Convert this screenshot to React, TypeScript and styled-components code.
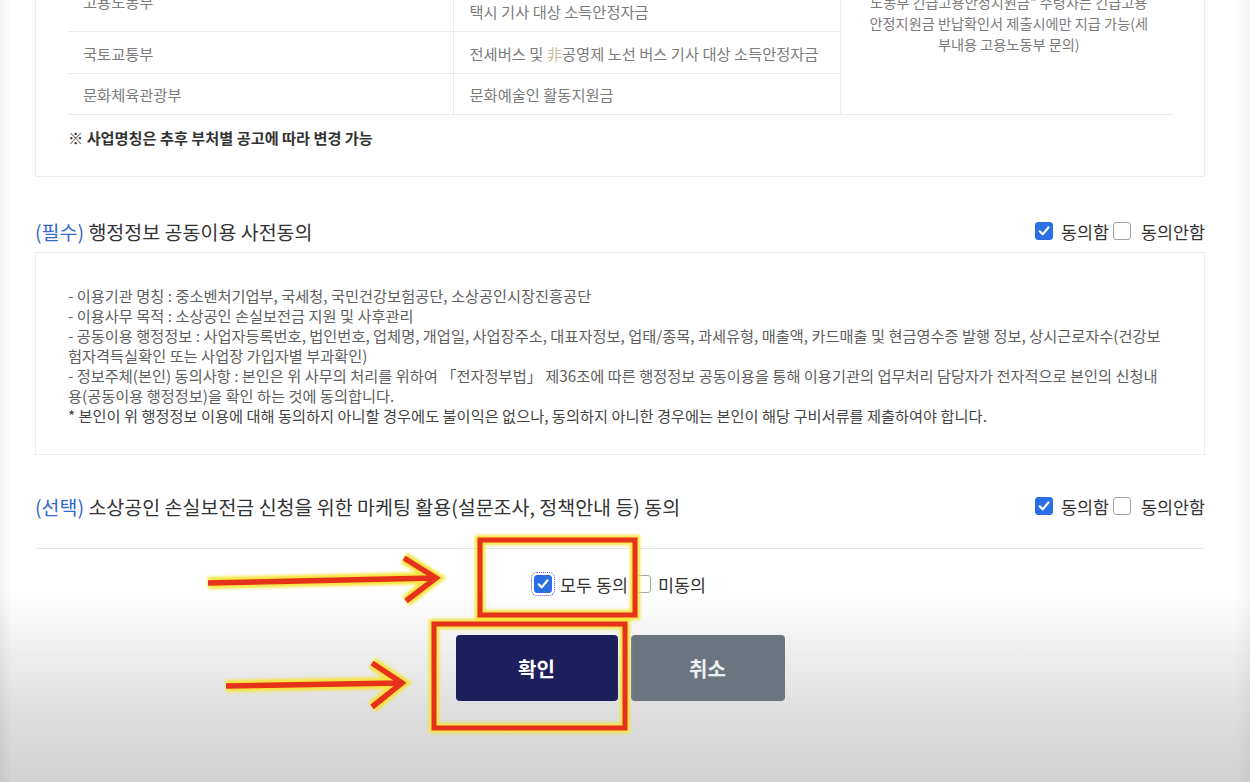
import React from "react";
import styled, { createGlobalStyle } from "styled-components";

const Global = createGlobalStyle`
  html, body { margin: 0; padding: 0; overflow: hidden; }
  body { font-family: "Noto Sans CJK KR", "Noto Sans", sans-serif; background: #fff; }
`;

const Page = styled.div`
  position: relative;
  width: 1250px;
  height: 782px;
  overflow: hidden;
  background:
    linear-gradient(90deg, rgba(0,0,0,0.05) 0, rgba(0,0,0,0) 12px, rgba(0,0,0,0) 1236px, rgba(0,0,0,0.04) 1250px),
    linear-gradient(180deg, #ffffff 0, #ffffff 592px, #ececec 660px, #dcdcdc 720px, #d2d2d2 782px);
`;

const Container = styled.div`
  width: 1170px;
  margin: -29px 0 0 35px;
  display: flex;
  flex-direction: column;
`;

const Card = styled.div`
  border: 1px solid #ececec;
  border-top: none;
  padding: 0 31px 29px 32px;
`;

const Table = styled.table`
  width: 100%;
  border-collapse: collapse;
  table-layout: fixed;
  font-size: 15.3px;
  color: #7b7b7b;
`;

const Cell = styled.td<{ $first?: boolean }>`
  border-bottom: 1px solid #e9e9e9;
  border-left: ${(p) => (p.$first ? "none" : "1px solid #e9e9e9")};
  padding: 10px 15px 10px ${(p) => (p.$first ? "15px" : "16px")};
  line-height: 20px;
  vertical-align: middle;
  white-space: nowrap;
`;

const NoteCell = styled.td`
  border-bottom: 1px solid #e9e9e9;
  border-left: 1px solid #e9e9e9;
  text-align: center;
  vertical-align: bottom;
  padding: 0 6px 59px 10px;
  line-height: 21px;
  font-size: 14.2px;
  color: #7b7b7b;
  white-space: nowrap;
`;

const Faint = styled.span`
  color: #c9b9a0;
`;

const Note = styled.div`
  margin-top: 12px;
  font-size: 15.2px;
  line-height: 20px;
  font-weight: 700;
  color: #333;
`;

const SectionHead = styled.div<{ $top: number }>`
  margin-top: ${(p) => p.$top}px;
  height: 26px;
  display: flex;
  align-items: center;
  justify-content: space-between;
`;

const Title = styled.div`
  font-size: 19.5px;
  color: #333;
  white-space: nowrap;
`;

const Tag = styled.span`
  color: #3569cc;
`;

const Choices = styled.div`
  display: flex;
  align-items: center;
  gap: 4px;
`;

const Choice = styled.label<{ $gap?: number }>`
  display: inline-flex;
  align-items: center;
  gap: ${(p) => p.$gap ?? 8}px;
  font-size: 17.4px;
  color: #333;
  white-space: nowrap;
`;

const BoxMark = styled.span<{ $checked?: boolean; $focus?: boolean }>`
  width: 18px;
  height: 18px;
  box-sizing: border-box;
  border-radius: 3px;
  display: inline-flex;
  align-items: center;
  justify-content: center;
  background: ${(p) => (p.$checked ? "#2a6fe3" : "#fff")};
  border: 1px solid ${(p) => (p.$checked ? "#2a6fe3" : "#a3a3a3")};
  outline: ${(p) => (p.$focus ? "1px dotted #4b55b8" : "none")};
  outline-offset: 2px;
`;

const ContentBox = styled.div`
  margin-top: 8px;
  border: 1px solid #eeeeee;
  padding: 32px 10px 29px 32px;
  font-size: 15.25px;
  line-height: 20px;
  color: #5e5e5e;
  white-space: nowrap;
`;

const Line = styled.div<{ $strong?: boolean }>`
  color: ${(p) => (p.$strong ? "#444" : "#5e5e5e")};
`;

const Section2 = styled.div`
  border-bottom: 1px solid #e6e6e6;
  padding-bottom: 29px;
`;

const AgreeRow = styled.div`
  margin-top: 25px;
  height: 20px;
  display: flex;
  justify-content: center;
  align-items: center;
  gap: 5px;
`;

const Buttons = styled.div`
  margin-top: 41px;
  display: flex;
  justify-content: center;
  gap: 13px;
`;

const Btn = styled.button<{ $primary?: boolean; $w: number }>`
  width: ${(p) => p.$w}px;
  height: 66px;
  border: none;
  border-radius: 4px;
  background: ${(p) => (p.$primary ? "#1c1f5b" : "#6b7580")};
  color: ${(p) => (p.$primary ? "#ffffff" : "#eef0f3")};
  font-family: "Noto Sans CJK KR", sans-serif;
  font-size: 20px;
  font-weight: 700;
`;

const Overlay = styled.svg`
  position: absolute;
  left: 0;
  top: 0;
  pointer-events: none;
`;

const Check = ({ checked, focus }: { checked?: boolean; focus?: boolean }) => (
  <BoxMark $checked={checked} $focus={focus}>
    {checked && (
      <svg width="14" height="14" viewBox="0 0 13 13">
        <polyline points="2.5,6.8 5.3,9.6 10.6,3.2" fill="none" stroke="#fff" strokeWidth="2" strokeLinecap="round" strokeLinejoin="round" />
      </svg>
    )}
  </BoxMark>
);

const AgreeChoices = () => (
  <Choices>
    <Choice>
      <Check checked />
      동의함
    </Choice>
    <Choice $gap={10}>
      <Check />
      동의안함
    </Choice>
  </Choices>
);

const Annotations = () => {
  const red = "#e6321b";
  const yellow = "#f6e43c";
  const arrow1 = "M208 583 L434 578 M404 558 L436 578 L406 601";
  const arrow2 = "M226 686 L400 683 M372 663 L402 683 L372 707";
  return (
    <Overlay width="1250" height="782" viewBox="0 0 1250 782">
      <defs>
        <filter id="glow" x="-20%" y="-20%" width="140%" height="140%">
          <feGaussianBlur stdDeviation="1.4" />
        </filter>
      </defs>
      <g filter="url(#glow)" fill="none" stroke={yellow} strokeLinejoin="miter" strokeLinecap="butt">
        <path d={arrow1} strokeWidth="12" />
        <path d={arrow2} strokeWidth="12" />
        <rect x="480" y="540" width="155" height="75" strokeWidth="10" />
        <rect x="434" y="624" width="191" height="104" strokeWidth="10" />
      </g>
      <g fill="none" stroke={red} strokeLinejoin="miter">
        <path d={arrow1} strokeWidth="5.5" />
        <path d={arrow2} strokeWidth="5.5" />
        <rect x="480" y="540" width="155" height="75" strokeWidth="5" />
        <rect x="434" y="624" width="191" height="104" strokeWidth="5" />
      </g>
    </Overlay>
  );
};

export default function App() {
  return (
    <Page>
      <Global />
      <Container>
        <Card>
          <Table>
            <colgroup>
              <col style={{ width: "385px" }} />
              <col style={{ width: "387px" }} />
              <col />
            </colgroup>
            <tbody>
              <tr>
                <Cell $first>고용노동부</Cell>
                <Cell>
                  법인택시 기사 대상 "긴급고용안정지원금" 및 개인
                  <br />
                  택시 기사 대상 소득안정자금
                </Cell>
                <NoteCell rowSpan={3}>
                  ※ 소득안정자금은 중복 지원 불가, 단 "고용
                  <br />
                  노동부 긴급고용안정지원금" 수령자는 긴급고용
                  <br />
                  안정지원금 반납확인서 제출시에만 지급 가능(세
                  <br />
                  부내용 고용노동부 문의)
                </NoteCell>
              </tr>
              <tr>
                <Cell $first>국토교통부</Cell>
                <Cell>
                  전세버스 및 <Faint>非</Faint>공영제 노선 버스 기사 대상 소득안정자금
                </Cell>
              </tr>
              <tr>
                <Cell $first>문화체육관광부</Cell>
                <Cell>문화예술인 활동지원금</Cell>
              </tr>
            </tbody>
          </Table>
          <Note>※ 사업명칭은 추후 부처별 공고에 따라 변경 가능</Note>
        </Card>

        <SectionHead $top={41}>
          <Title>
            <Tag>(필수)</Tag> 행정정보 공동이용 사전동의
          </Title>
          <AgreeChoices />
        </SectionHead>
        <ContentBox>
          <Line>- 이용기관 명칭 : 중소벤처기업부, 국세청, 국민건강보험공단, 소상공인시장진흥공단</Line>
          <Line>- 이용사무 목적 : 소상공인 손실보전금 지원 및 사후관리</Line>
          <Line>
            - 공동이용 행정정보 : 사업자등록번호, 법인번호, 업체명, 개업일, 사업장주소, 대표자정보, 업태/종목, 과세유형, 매출액, 카드매출 및 현금영수증 발행 정보, 상시근로자수(건강보
          </Line>
          <Line>험자격득실확인 또는 사업장 가입자별 부과확인)</Line>
          <Line>
            - 정보주체(본인) 동의사항 : 본인은 위 사무의 처리를 위하여 「전자정부법」 제36조에 따른 행정정보 공동이용을 통해 이용기관의 업무처리 담당자가 전자적으로 본인의 신청내
          </Line>
          <Line>용(공동이용 행정정보)을 확인 하는 것에 동의합니다.</Line>
          <Line $strong>
            * 본인이 위 행정정보 이용에 대해 동의하지 아니할 경우에도 불이익은 없으나, 동의하지 아니한 경우에는 본인이 해당 구비서류를 제출하여야 합니다.
          </Line>
        </ContentBox>

        <Section2>
          <SectionHead $top={38}>
            <Title>
              <Tag>(선택)</Tag> 소상공인 손실보전금 신청을 위한 마케팅 활용(설문조사, 정책안내 등) 동의
            </Title>
            <AgreeChoices />
          </SectionHead>
        </Section2>

        <AgreeRow>
          <Choice>
            <Check checked focus />
            모두 동의
          </Choice>
          <Choice $gap={7}>
            <Check />
            미동의
          </Choice>
        </AgreeRow>

        <Buttons>
          <Btn $primary $w={162}>확인</Btn>
          <Btn $w={154}>취소</Btn>
        </Buttons>
      </Container>
      <Annotations />
    </Page>
  );
}
